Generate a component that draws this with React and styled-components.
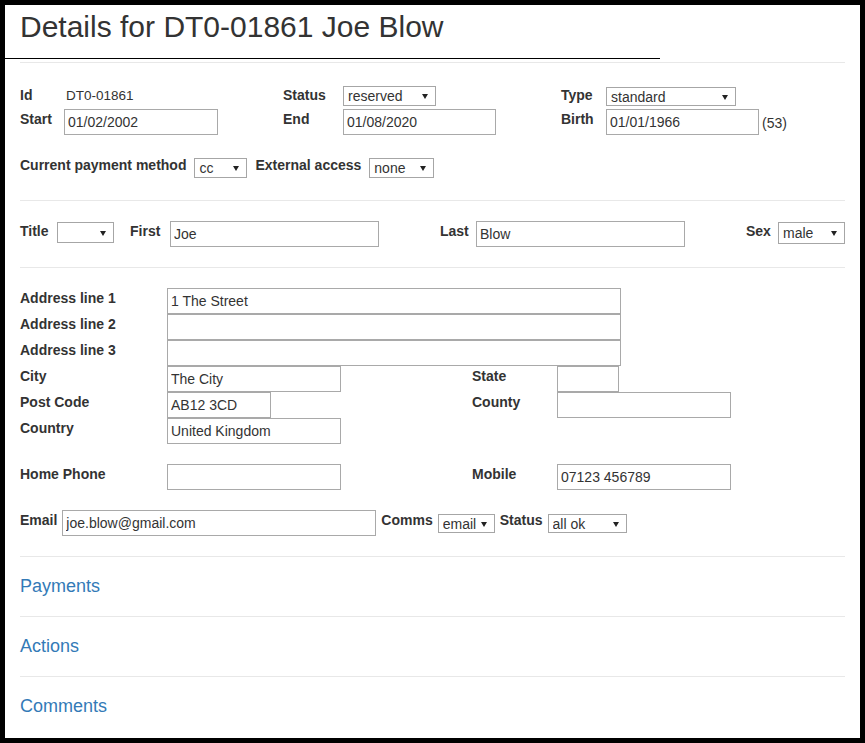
import React from "react";
import styled, { createGlobalStyle } from "styled-components";

const GlobalStyle = createGlobalStyle`
    html, body {
        margin: 0;
        padding: 0;
    }
    body {
        background: #000;
        padding: 5px;
        font-family: "Liberation Sans", Arial, sans-serif;
        font-size: 14px;
        color: #333;
    }
`;

const Frame = styled.div`
    background: #fff;
    height: 733px;
    box-sizing: border-box;
    padding: 0 15px;
    overflow: hidden;
`;

const Heading = styled.h1`
    margin: 5px 0 0;
    font-size: 30px;
    font-weight: 400;
    line-height: 33px;
    color: #333;
`;

const BlackRule = styled.div`
    margin: 15px 0 0 -15px;
    width: 655px;
    height: 1px;
    background: #000;
`;

const Section = styled.div`
    margin-top: ${p => p.$mt || 0}px;
    border-top: 1px solid #e8e8e8;
    padding: ${p => p.$pt}px 0 ${p => p.$pb}px;
`;

const Label = styled.label`
    display: block;
    font-weight: 700;
    font-size: 14px;
    line-height: 20px;
    color: #333;
    white-space: nowrap;
    width: ${p => (p.$w ? p.$w + "px" : "auto")};
    margin-top: ${p => p.$mt || 0}px;
    flex: none;
`;

const Value = styled.span`
    display: block;
    padding-left: 2px;
    font-size: 13.5px;
    line-height: 20px;
`;

const Note = styled.span`
    margin-left: 3px;
    font-size: 14px;
    line-height: 26px;
    padding-top: 1px;
`;

const Input = styled.input`
    box-sizing: border-box;
    width: ${p => p.$w}px;
    height: 26px;
    margin: ${p => p.$mt || 0}px 0 0;
    border: 1px solid #a9a9a9;
    border-radius: 0;
    padding: 0 3px;
    font-family: "Liberation Sans", Arial, sans-serif;
    font-size: 14px;
    color: #333;
    background: #fff;
    outline: none;
    flex: none;
`;

const SelectWrap = styled.div`
    position: relative;
    flex: none;
    width: ${p => p.$w}px;
    height: ${p => p.$h || 20}px;
    margin-top: ${p => p.$mt || 0}px;

    &::after {
        content: "";
        position: absolute;
        right: 8px;
        top: 50%;
        margin-top: -2px;
        border-left: 3.5px solid transparent;
        border-right: 3.5px solid transparent;
        border-top: 5px solid #222;
        pointer-events: none;
    }
`;

const NativeSelect = styled.select`
    appearance: none;
    -webkit-appearance: none;
    box-sizing: border-box;
    width: 100%;
    height: 100%;
    margin: 0;
    border: 1px solid #a6a6a6;
    border-radius: 0;
    padding: 0 16px 0 4px;
    background: #fff;
    font-family: "Liberation Sans", Arial, sans-serif;
    font-size: 14px;
    color: #333;
    outline: none;
`;

function Select({ value, w, h, mt }) {
    return (
        <SelectWrap $w={w} $h={h} $mt={mt}>
            <NativeSelect defaultValue={value}>
                <option value={value}>{value}</option>
            </NativeSelect>
        </SelectWrap>
    );
}

const TopGrid = styled.div`
    display: grid;
    grid-template-columns: 44px 219px 60px 218px 45px auto;
    grid-template-rows: 20px 26px;
    row-gap: 3px;
    align-items: start;
`;

const Inline = styled.div`
    display: flex;
    align-items: flex-start;
`;

const FlowRow = styled.div`
    display: flex;
    align-items: flex-start;
    gap: ${p => p.$gap}px;
    margin-top: ${p => p.$mt || 0}px;
`;

const NameGrid = styled.div`
    display: grid;
    grid-template-columns: 110px 310px 306px auto;
    align-items: start;
`;

const AddressGrid = styled.div`
    display: grid;
    grid-template-columns: 147px 305px 85px auto;
    grid-auto-rows: 26px;
    align-items: start;
    margin-top: ${p => p.$mt || 0}px;
`;

const Wide = styled.div`
    grid-column: 2 / span 3;
`;

const Panel = styled.div`
    box-sizing: border-box;
    height: 60px;
    border-top: 1px solid #e8e8e8;
    padding-top: 20px;
`;

const PanelLink = styled.a`
    display: block;
    font-size: 18px;
    line-height: 1.1;
    color: #337ab7;
    text-decoration: none;
    cursor: pointer;
`;

export default function App() {
    return (
        <>
            <GlobalStyle />
            <Frame>
                <Heading>Details for DT0-01861 Joe Blow</Heading>
                <BlackRule />
                <Section $mt={3} $pt={23} $pb={22}>
                    <TopGrid>
                        <Label $mt={-1}>Id</Label>
                        <Value>DT0-01861</Value>
                        <Label $mt={-1}>Status</Label>
                        <Select value="reserved" w={93} />
                        <Label $mt={-1}>Type</Label>
                        <Select value="standard" w={130} h={19} mt={1} />

                        <Label>Start</Label>
                        <Input $w={154} defaultValue="01/02/2002" />
                        <Label>End</Label>
                        <Input $w={153} defaultValue="01/08/2020" />
                        <Label>Birth</Label>
                        <Inline>
                            <Input $w={153} defaultValue="01/01/1966" />
                            <Note>(53)</Note>
                        </Inline>
                    </TopGrid>
                    <FlowRow $gap={8} $mt={20}>
                        <Label>Current payment method</Label>
                        <Select value="cc" w={53} mt={3} />
                        <Label>External access</Label>
                        <Select value="none" w={65} mt={3} />
                    </FlowRow>
                </Section>

                <Section $pt={20} $pb={20}>
                    <NameGrid>
                        <Inline>
                            <Label $w={37}>Title</Label>
                            <Select value="" w={57} h={21} mt={1} />
                        </Inline>
                        <Inline>
                            <Label $w={40}>First</Label>
                            <Input $w={209} defaultValue="Joe" />
                        </Inline>
                        <Inline>
                            <Label $w={36}>Last</Label>
                            <Input $w={209} defaultValue="Blow" />
                        </Inline>
                        <Inline>
                            <Label $w={32}>Sex</Label>
                            <Select value="male" w={67} h={22} mt={1} />
                        </Inline>
                    </NameGrid>
                </Section>

                <Section $pt={20} $pb={20}>
                    <AddressGrid>
                        <Label>Address line 1</Label>
                        <Wide>
                            <Input $w={454} defaultValue="1 The Street" />
                        </Wide>
                        <Label>Address line 2</Label>
                        <Wide>
                            <Input $w={454} defaultValue="" />
                        </Wide>
                        <Label>Address line 3</Label>
                        <Wide>
                            <Input $w={454} defaultValue="" />
                        </Wide>
                        <Label>City</Label>
                        <Input $w={174} defaultValue="The City" />
                        <Label>State</Label>
                        <Input $w={62} defaultValue="" />
                        <Label>Post Code</Label>
                        <Input $w={104} defaultValue="AB12 3CD" />
                        <Label>County</Label>
                        <Input $w={174} defaultValue="" />
                        <Label>Country</Label>
                        <Input $w={174} defaultValue="United Kingdom" />
                    </AddressGrid>
                    <AddressGrid $mt={20}>
                        <Label>Home Phone</Label>
                        <Input $w={174} defaultValue="" />
                        <Label>Mobile</Label>
                        <Input $w={174} defaultValue="07123 456789" />
                    </AddressGrid>
                    <FlowRow $gap={5} $mt={20}>
                        <Label>Email</Label>
                        <Input $w={314} defaultValue="joe.blow@gmail.com" />
                        <Label>Comms</Label>
                        <Select value="email" w={57} h={19} mt={4} />
                        <Label>Status</Label>
                        <Select value="all ok" w={79} h={19} mt={4} />
                    </FlowRow>
                </Section>

                <Panel>
                    <PanelLink>Payments</PanelLink>
                </Panel>
                <Panel>
                    <PanelLink>Actions</PanelLink>
                </Panel>
                <Panel>
                    <PanelLink>Comments</PanelLink>
                </Panel>
            </Frame>
        </>
    );
}
